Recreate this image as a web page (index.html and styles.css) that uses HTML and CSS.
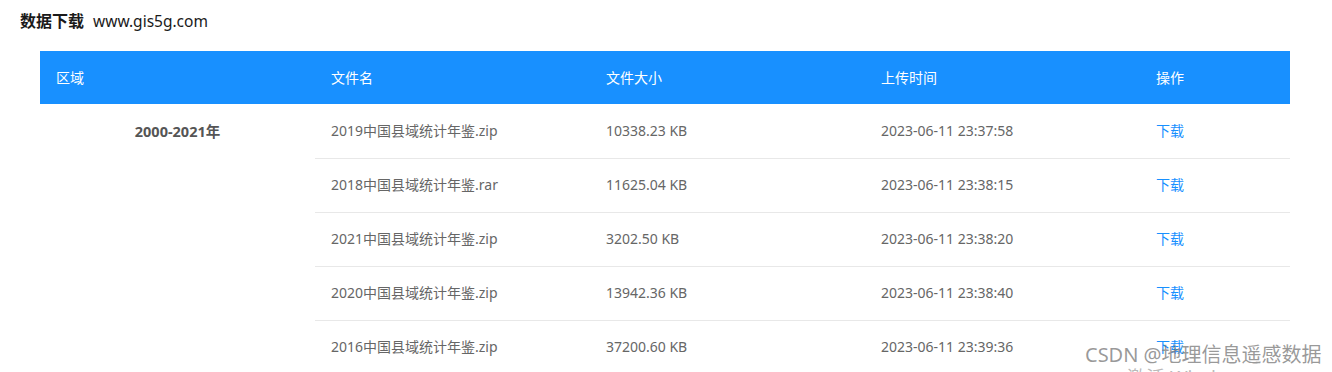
FILE: index.html
```html
<!DOCTYPE html>
<html lang="zh">
<head>
<meta charset="utf-8">
<link rel="stylesheet" href="styles.css">
</head>
<body>
<div class="page">
  <div class="title"><span class="title-main">数据下载</span><span class="title-site">www.gis5g.com</span></div>
  <table class="data">
    <colgroup>
      <col class="c1"><col class="c2"><col class="c3"><col class="c4"><col class="c5">
    </colgroup>
    <thead>
      <tr>
        <th>区域</th>
        <th>文件名</th>
        <th>文件大小</th>
        <th>上传时间</th>
        <th>操作</th>
      </tr>
    </thead>
    <tbody>
      <tr>
        <td class="region" rowspan="5">2000-2021年</td>
        <td>2019中国县域统计年鉴.zip</td>
        <td>10338.23 KB</td>
        <td>2023-06-11 23:37:58</td>
        <td><a class="dl" href="#">下载</a></td>
      </tr>
      <tr>
        <td>2018中国县域统计年鉴.rar</td>
        <td>11625.04 KB</td>
        <td>2023-06-11 23:38:15</td>
        <td><a class="dl" href="#">下载</a></td>
      </tr>
      <tr>
        <td>2021中国县域统计年鉴.zip</td>
        <td>3202.50 KB</td>
        <td>2023-06-11 23:38:20</td>
        <td><a class="dl" href="#">下载</a></td>
      </tr>
      <tr>
        <td>2020中国县域统计年鉴.zip</td>
        <td>13942.36 KB</td>
        <td>2023-06-11 23:38:40</td>
        <td><a class="dl" href="#">下载</a></td>
      </tr>
      <tr>
        <td>2016中国县域统计年鉴.zip</td>
        <td>37200.60 KB</td>
        <td>2023-06-11 23:39:36</td>
        <td><a class="dl" href="#">下载</a></td>
      </tr>
    </tbody>
  </table>
</div>
<div class="watermark">CSDN @地理信息遥感数据</div>
<div class="activate">激活 Windows</div>
</body>
</html>
```

FILE: styles.css
```css
html, body {
  margin: 0;
  padding: 0;
  background: #fff;
  overflow: hidden;
}
body {
  font-family: "Segoe UI", "Noto Sans", "Noto Sans CJK SC", sans-serif;
  font-size: 14px;
  color: #666;
}
.page {
  padding: 9px 20px 0 20px;
}
.title {
  display: flex;
  align-items: baseline;
  gap: 9px;
  height: 24px;
  line-height: 24px;
  color: #1a1a1a;
  margin-bottom: 18px;
}
.title-main {
  font-size: 16px;
  font-weight: 700;
}
.title-site {
  font-size: 15.5px;
}
.data {
  margin-left: 20px;
  width: 1250px;
  border-collapse: collapse;
  table-layout: fixed;
}
.c1, .c2, .c3, .c4 { width: 275px; }
.c5 { width: 150px; }
.data th {
  background: #1890ff;
  color: #fff;
  font-weight: 400;
  text-align: left;
  height: 53px;
  padding: 0 16px;
  line-height: 22px;
  box-sizing: border-box;
}
.data td {
  height: 54px;
  padding: 0 16px;
  line-height: 22px;
  border-bottom: 1px solid #e8e8e8;
  box-sizing: border-box;
  vertical-align: middle;
  white-space: nowrap;
}
.data td.region {
  text-align: center;
  vertical-align: top;
  padding-top: 16px;
  font-weight: 700;
  font-size: 14.5px;
  color: #555;
  border-bottom: none;
}
.dl {
  color: #1890ff;
  text-decoration: none;
}
.watermark {
  position: absolute;
  left: 1085px;
  top: 339px;
  font-size: 20px;
  color: rgba(120, 120, 120, 0.75);
  white-space: nowrap;
}
.activate {
  position: absolute;
  left: 1127px;
  top: 363px;
  font-size: 19px;
  color: rgba(140, 140, 140, 0.6);
  white-space: nowrap;
}
```
